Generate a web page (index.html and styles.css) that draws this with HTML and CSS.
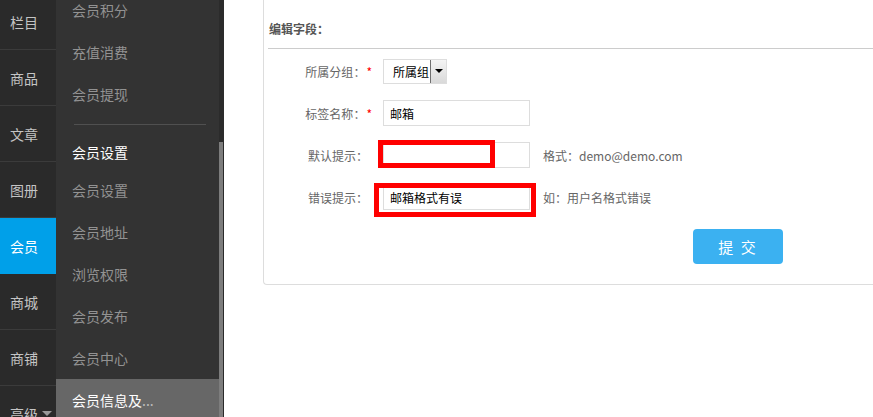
FILE: index.html
```html
<!DOCTYPE html>
<html lang="zh-CN">
<head>
    <meta charset="UTF-8">
    <title>会员信息及字段</title>
    <link rel="stylesheet" href="styles.css">
</head>
<body>
    <div class="page">
        <nav class="nav">
            <a class="nav-item">栏目</a>
            <a class="nav-item">商品</a>
            <a class="nav-item">文章</a>
            <a class="nav-item">图册</a>
            <a class="nav-item active">会员</a>
            <a class="nav-item">商城</a>
            <a class="nav-item">商铺</a>
            <a class="nav-item">高级<span class="caret"></span></a>
        </nav>
        <aside class="subnav">
            <ul class="sub-list">
                <li>会员积分</li>
                <li>充值消费</li>
                <li>会员提现</li>
                <li class="sub-sep"></li>
                <li class="sub-title">会员设置</li>
                <li>会员设置</li>
                <li>会员地址</li>
                <li>浏览权限</li>
                <li>会员发布</li>
                <li>会员中心</li>
                <li class="current">会员信息及<span class="dots">...</span></li>
            </ul>
            <div class="scrollbar"><div class="thumb"></div></div>
        </aside>
        <main class="main">
            <div class="panel">
                <h3 class="panel-title">编辑字段<span class="colon">：</span></h3>
                <form class="field-form">
                    <div class="form-row">
                        <label class="form-label">所属分组<span class="colon">：</span><em>*</em></label>
                        <div class="select-box">
                            <span class="select-text">所属组</span>
                            <span class="select-btn"></span>
                        </div>
                    </div>
                    <div class="form-row">
                        <label class="form-label">标签名称<span class="colon">：</span><em>*</em></label>
                        <div class="field"><input class="text-input" type="text" value="邮箱"></div>
                    </div>
                    <div class="form-row">
                        <label class="form-label plain">默认提示<span class="colon">：</span></label>
                        <div class="field">
                            <input class="text-input" type="text" value="">
                            <span class="mark mark-one"></span>
                        </div>
                        <span class="hint">格式<span class="colon">：</span>demo@demo.com</span>
                    </div>
                    <div class="form-row">
                        <label class="form-label plain">错误提示<span class="colon">：</span></label>
                        <div class="field">
                            <input class="text-input" type="text" value="邮箱格式有误">
                            <span class="mark mark-two"></span>
                        </div>
                        <span class="hint">如<span class="colon">：</span>用户名格式错误</span>
                    </div>
                    <div class="form-actions">
                        <button class="submit-btn" type="button">提 交</button>
                    </div>
                </form>
            </div>
        </main>
    </div>
</body>
</html>
```

FILE: styles.css
```css
* {
    margin: 0;
    padding: 0;
    box-sizing: border-box;
}
body {
    font-family: "Noto Sans CJK SC", "Microsoft YaHei", sans-serif;
    font-size: 12px;
    background: #fff;
    overflow: hidden;
}
.page {
    display: flex;
    height: 417px;
    overflow: hidden;
}
.colon {
    font-family: "Noto Sans CJK JP", sans-serif;
}

/* left column */
.nav {
    width: 56px;
    flex-shrink: 0;
    background-color: #2a2a2a;
    margin-top: -6px;
}
.nav-item {
    display: flex;
    align-items: center;
    height: 56px;
    padding-left: 10px;
    color: #c4c4c4;
    font-size: 14px;
    border-bottom: 1px solid #3b3b3b;
}
.nav-item.active {
    background-color: #00a0e9;
    border-bottom-color: #00a0e9;
    color: #fff;
}
.caret {
    display: inline-block;
    margin-left: 4px;
    border-left: 5px solid transparent;
    border-right: 5px solid transparent;
    border-top: 5px solid #999;
}

/* second column */
.subnav {
    width: 168px;
    flex-shrink: 0;
    display: flex;
    background-color: #333;
}
.sub-list {
    flex: 1;
    list-style: none;
    margin-top: -11px;
}
.sub-list li {
    height: 42px;
    line-height: 42px;
    padding-left: 16px;
    font-size: 14px;
    color: #929292;
}
.sub-list .sub-sep {
    height: 1px;
    margin: 9px 13px 0 18px;
    background-color: #505050;
}
.sub-list .sub-title {
    height: 44px;
    padding-top: 10px;
    line-height: 34px;
    color: #fff;
}
.sub-list .current {
    background-color: #676767;
    color: #fff;
}
.dots {
    color: #bbb;
}
.scrollbar {
    width: 5px;
    background-color: #2b2b2b;
    padding-top: 142px;
}
.thumb {
    width: 4px;
    height: 100%;
    background-color: #7d7d7d;
}

/* content */
.main {
    flex: 1;
    background: #fff;
    padding-left: 39px;
    overflow: hidden;
}
.panel {
    border-left: 1px solid #ddd;
    border-bottom: 1px solid #ddd;
    border-bottom-left-radius: 4px;
    padding-bottom: 20px;
}
.panel-title {
    margin-left: 4px;
    padding: 19px 0 9px 1px;
    line-height: 20px;
    font-size: 12px;
    font-weight: bold;
    color: #555;
    border-bottom: 1px solid #ccc;
}
.field-form {
    padding-top: 9px;
}
.form-row {
    display: flex;
    align-items: center;
    height: 26px;
    margin-bottom: 16px;
}
.form-label {
    width: 108px;
    text-align: right;
    color: #666;
}
.form-label em {
    font-style: normal;
    color: #f00;
    padding-left: 1px;
}
.form-label.plain {
    padding-right: 4px;
}
.select-box {
    display: flex;
    align-items: center;
    width: 64px;
    height: 25px;
    margin-left: 11px;
    border: 1px solid #ddd;
    overflow: hidden;
}
.select-text {
    flex: 1;
    padding-left: 9px;
    white-space: nowrap;
    overflow: hidden;
    color: #000;
}
.select-btn {
    position: relative;
    flex-shrink: 0;
    width: 17px;
    height: 25px;
    margin-right: -1px;
    border: 1px solid #707070;
    background: linear-gradient(#f4f4f4, #d9d9d9);
}
.select-btn::after {
    content: "";
    position: absolute;
    left: 4px;
    top: 9px;
    border-left: 4px solid transparent;
    border-right: 4px solid transparent;
    border-top: 4px solid #000;
}
.field {
    position: relative;
    margin-left: 11px;
}
.text-input {
    display: block;
    width: 147px;
    height: 26px;
    padding-left: 6px;
    border: 1px solid #ddd;
    font-family: inherit;
    font-size: 12px;
    color: #000;
    outline: none;
}
.mark {
    position: absolute;
    border: 5px solid #f00;
}
.mark-one {
    left: -5px;
    top: -2px;
    width: 117px;
    height: 28px;
}
.mark-two {
    left: -9px;
    top: -1px;
    width: 162px;
    height: 34px;
}
.hint {
    margin-left: 13px;
    color: #666;
}
.form-actions {
    padding-left: 429px;
    padding-top: 3px;
}
.submit-btn {
    width: 90px;
    height: 35px;
    border: none;
    border-radius: 4px;
    background-color: #3bb1f1;
    color: #fff;
    font-family: inherit;
    font-size: 15px;
    letter-spacing: 2px;
}
```
